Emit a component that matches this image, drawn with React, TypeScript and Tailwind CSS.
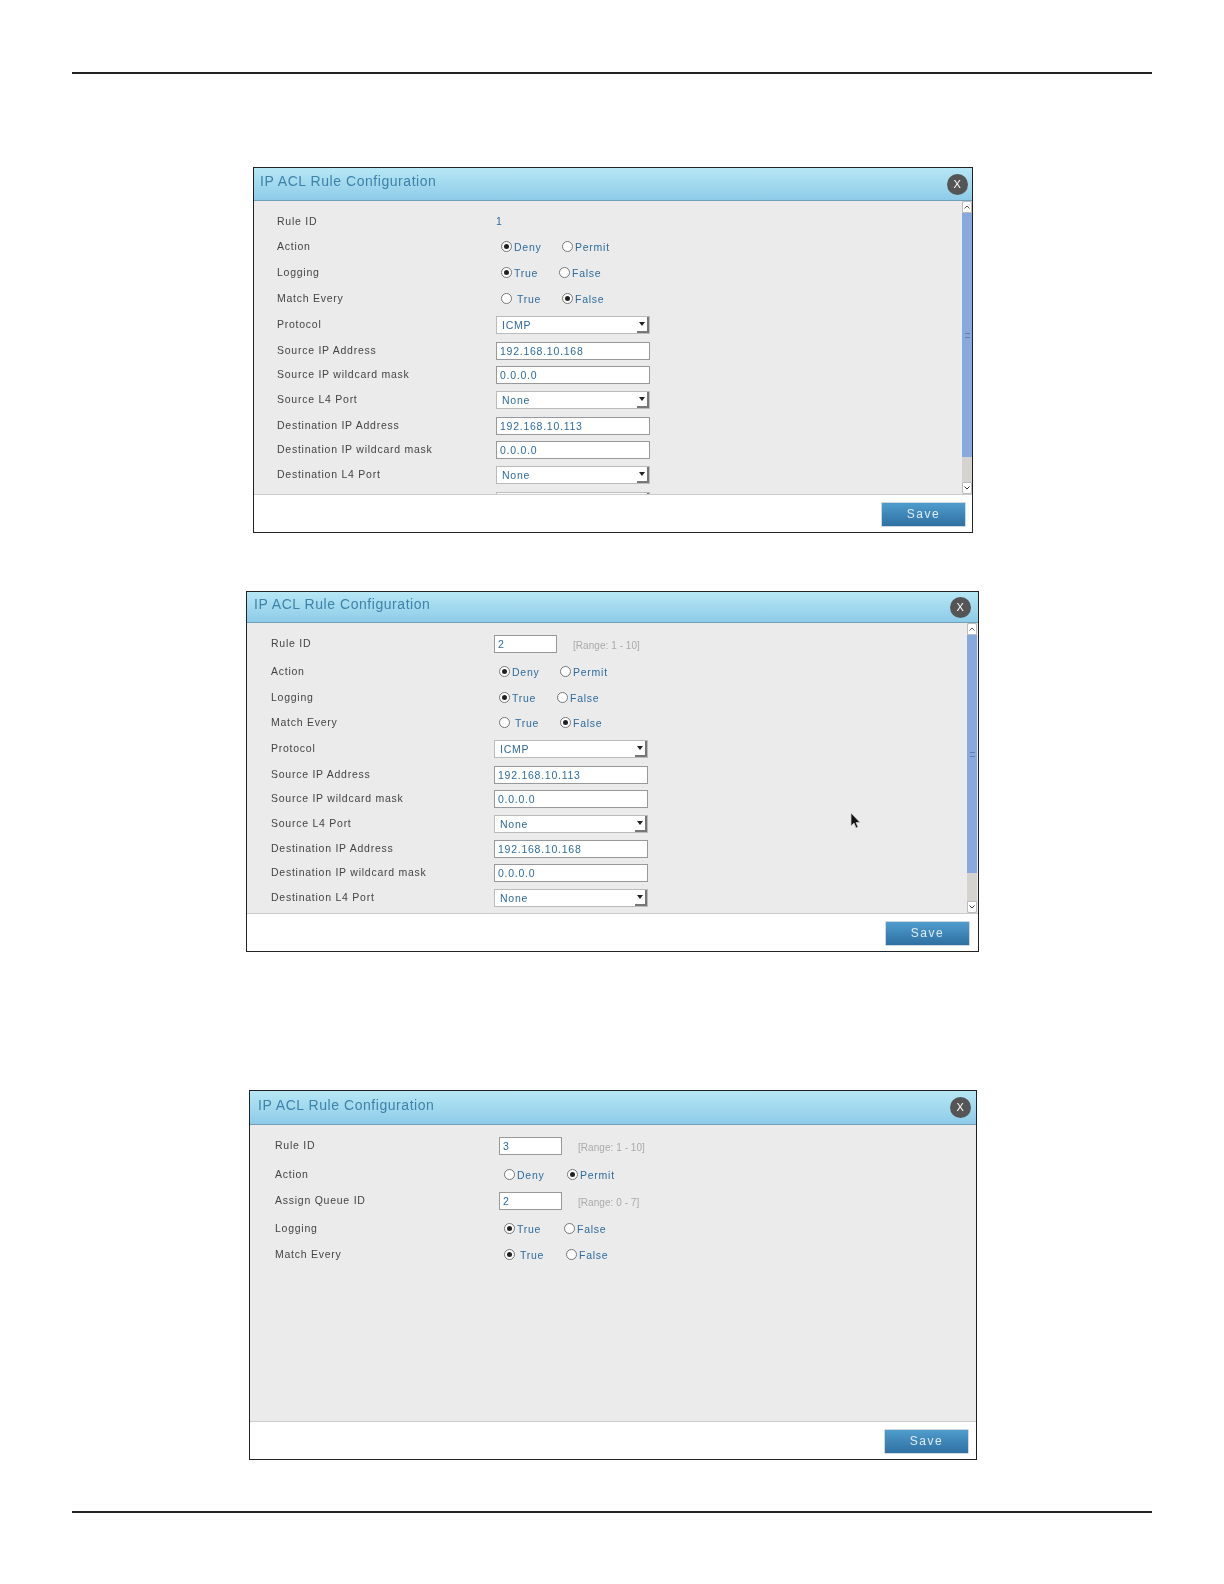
import { ReactNode } from "react";

type RadioOption = { label: string; checked?: boolean; textGap?: string };

function Radio({ checked }: { checked?: boolean }) {
  return (
    <span className="flex h-[11px] w-[11px] shrink-0 -translate-y-[1px] items-center justify-center rounded-full border border-[#777] bg-white">
      {checked && <span className="h-[5px] w-[5px] rounded-full bg-[#222]" />}
    </span>
  );
}

function Radios({ first, second, firstW }: { first: RadioOption; second: RadioOption; firstW: string }) {
  return (
    <div className="flex items-center pl-[5px]">
      <div className={`flex items-center ${firstW}`}>
        <Radio checked={first.checked} />
        <span className={`pt-[1px] text-[#2f6b9c] ${first.textGap ?? "ml-[2px]"}`}>{first.label}</span>
      </div>
      <div className="flex items-center">
        <Radio checked={second.checked} />
        <span className="ml-[2px] pt-[1px] text-[#2f6b9c]">{second.label}</span>
      </div>
    </div>
  );
}

function TextBox({ value }: { value: string }) {
  return (
    <div className="flex h-[18px] w-[154px] items-center border border-[#999] bg-white pt-[1px] pl-[3px] text-[#2f6b9c]">
      {value}
    </div>
  );
}

function SelectBox({ value }: { value: string }) {
  return (
    <div className="flex h-[18px] w-[154px] items-center border border-[#bbb] bg-white pl-[5px] text-[#2f6b9c]">
      <span className="pt-[1px]">{value}</span>
      <span className="ml-auto flex h-[16px] w-[12px] items-center justify-center border-r-2 border-b-2 border-[#777]">
        <svg width="6" height="4" viewBox="0 0 6 4">
          <path d="M0 0h6L3 4z" fill="#222" />
        </svg>
      </span>
    </div>
  );
}

function RangeBox({ value, range }: { value: string; range: string }) {
  return (
    <div className="flex items-center">
      <div className="flex h-[18px] w-[63px] items-center border border-[#999] bg-white pt-[1px] pl-[3px] text-[#2f6b9c]">
        {value}
      </div>
      <span className="ml-[16px] pt-[2px] text-[10px] tracking-[0.05px] text-[#aaa]">{range}</span>
    </div>
  );
}

function Row({ label, gap, labelW, children }: { label: string; gap: string; labelW: string; children: ReactNode }) {
  return (
    <div className={`flex h-[18px] shrink-0 items-center ${gap}`}>
      <div className={`shrink-0 pb-[1px] text-[#444] ${labelW}`}>{label}</div>
      {children}
    </div>
  );
}

function Scrollbar({ thumb, className = "" }: { thumb: string; className?: string }) {
  return (
    <div className={`flex w-[10px] shrink-0 flex-col bg-[#d5d3d0] ${className}`}>
      <div className="flex h-[12px] shrink-0 items-center justify-center rounded-t-[2px] border border-[#bbb] bg-white">
        <svg width="6" height="4" viewBox="0 0 6 4">
          <path d="M0.5 3.5L3 1l2.5 2.5" fill="none" stroke="#555" />
        </svg>
      </div>
      <div className={`flex shrink-0 items-center justify-center bg-[#87a9de] ${thumb}`}>
        <span className="h-[5px] w-[5px] border-y border-[#5d7fb5]" />
      </div>
      <div className="flex-1" />
      <div className="flex h-[12px] shrink-0 items-center justify-center rounded-b-[2px] border border-[#bbb] bg-white">
        <svg width="6" height="4" viewBox="0 0 6 4">
          <path d="M0.5 0.5L3 3l2.5-2.5" fill="none" stroke="#333" />
        </svg>
      </div>
    </div>
  );
}

function Dialog({
  className,
  headerH,
  titleLeft,
  closeRight,
  saveRight,
  bodyLeft,
  scrollbar,
  children,
}: {
  className: string;
  headerH: string;
  titleLeft: string;
  closeRight: string;
  saveRight: string;
  bodyLeft: string;
  scrollbar?: ReactNode;
  children: ReactNode;
}) {
  return (
    <div className={`relative flex flex-col border border-[#222] bg-white ${className}`}>
      <div
        className={`flex shrink-0 items-center justify-between border-b border-[#6f9fb9] bg-gradient-to-b from-[#b6e7f5] to-[#8ecbe8] ${headerH} ${titleLeft} ${closeRight}`}
      >
        <span className="pb-[5px] text-[14px] tracking-[0.55px] text-[#3f82a8]">IP ACL Rule Configuration</span>
        <button className="flex h-[21px] w-[21px] items-center justify-center rounded-full bg-[#555] text-[11px] text-white">
          X
        </button>
      </div>
      <div className="flex min-h-0 flex-1 border-b border-[#ccc] bg-[#ebebeb]">
        <div className={`flex min-w-0 flex-1 flex-col overflow-hidden pt-[12px] ${bodyLeft}`}>{children}</div>
        {scrollbar}
      </div>
      <div className={`flex h-[37px] shrink-0 items-center justify-end pt-[1px] ${saveRight}`}>
        <button className="h-[25px] w-[85px] rounded-[1px] border border-[#cfd8de] bg-gradient-to-b from-[#4f9dcd] to-[#2f70a2] text-[12px] tracking-[1.5px] text-[#dfecf4]">
          Save
        </button>
      </div>
    </div>
  );
}

export default function App() {
  const w1 = "w-[219px]";
  const w2 = "w-[223px]";
  const w3 = "w-[224px]";

  return (
    <div className="h-[1584px] w-[1224px] overflow-hidden bg-white pt-[72px] font-['Liberation_Sans',Arial,sans-serif] text-[10.5px] tracking-[0.75px] blur-[0.3px]">
      <div className="ml-[72px] h-[2px] w-[1080px] bg-[#222]" />

      <Dialog
        className="mt-[93px] ml-[253px] h-[366px] w-[720px]"
        headerH="h-[33px]"
        titleLeft="pl-[6px]"
        closeRight="pr-[4px]"
        saveRight="pr-[6px]"
        bodyLeft="pl-[23px]"
        scrollbar={<Scrollbar thumb="h-[244px]" />}
      >
        <Row label="Rule ID" gap="mt-0" labelW={w1}>
          <span className="text-[#2f6b9c]">1</span>
        </Row>
        <Row label="Action" gap="mt-[7px]" labelW={w1}>
          <Radios firstW="w-[61px]" first={{ label: "Deny", checked: true }} second={{ label: "Permit" }} />
        </Row>
        <Row label="Logging" gap="mt-[8px]" labelW={w1}>
          <Radios firstW="w-[58px]" first={{ label: "True", checked: true }} second={{ label: "False" }} />
        </Row>
        <Row label="Match Every" gap="mt-[8px]" labelW={w1}>
          <Radios firstW="w-[61px]" first={{ label: "True", textGap: "ml-[5px]" }} second={{ label: "False", checked: true }} />
        </Row>
        <Row label="Protocol" gap="mt-[8px]" labelW={w1}>
          <SelectBox value="ICMP" />
        </Row>
        <Row label="Source IP Address" gap="mt-[8px]" labelW={w1}>
          <TextBox value="192.168.10.168" />
        </Row>
        <Row label="Source IP wildcard mask" gap="mt-[6px]" labelW={w1}>
          <TextBox value="0.0.0.0" />
        </Row>
        <Row label="Source L4 Port" gap="mt-[7px]" labelW={w1}>
          <SelectBox value="None" />
        </Row>
        <Row label="Destination IP Address" gap="mt-[8px]" labelW={w1}>
          <TextBox value="192.168.10.113" />
        </Row>
        <Row label="Destination IP wildcard mask" gap="mt-[6px]" labelW={w1}>
          <TextBox value="0.0.0.0" />
        </Row>
        <Row label="Destination L4 Port" gap="mt-[7px]" labelW={w1}>
          <SelectBox value="None" />
        </Row>
        <Row label="" gap="mt-[8px]" labelW={w1}>
          <SelectBox value="" />
        </Row>
      </Dialog>

      <Dialog
        className="mt-[58px] ml-[246px] h-[361px] w-[733px]"
        headerH="h-[31px]"
        titleLeft="pl-[7px]"
        closeRight="pr-[7px]"
        saveRight="pr-[8px]"
        bodyLeft="pl-[24px]"
        scrollbar={<Scrollbar thumb="h-[238px]" className="mr-[1px]" />}
      >
        <Row label="Rule ID" gap="mt-0" labelW={w2}>
          <RangeBox value="2" range="[Range: 1 - 10]" />
        </Row>
        <Row label="Action" gap="mt-[10px]" labelW={w2}>
          <Radios firstW="w-[61px]" first={{ label: "Deny", checked: true }} second={{ label: "Permit" }} />
        </Row>
        <Row label="Logging" gap="mt-[8px]" labelW={w2}>
          <Radios firstW="w-[58px]" first={{ label: "True", checked: true }} second={{ label: "False" }} />
        </Row>
        <Row label="Match Every" gap="mt-[7px]" labelW={w2}>
          <Radios firstW="w-[61px]" first={{ label: "True", textGap: "ml-[5px]" }} second={{ label: "False", checked: true }} />
        </Row>
        <Row label="Protocol" gap="mt-[8px]" labelW={w2}>
          <SelectBox value="ICMP" />
        </Row>
        <Row label="Source IP Address" gap="mt-[8px]" labelW={w2}>
          <TextBox value="192.168.10.113" />
        </Row>
        <Row label="Source IP wildcard mask" gap="mt-[6px]" labelW={w2}>
          <TextBox value="0.0.0.0" />
        </Row>
        <Row label="Source L4 Port" gap="mt-[7px]" labelW={w2}>
          <SelectBox value="None" />
        </Row>
        <Row label="Destination IP Address" gap="mt-[7px]" labelW={w2}>
          <TextBox value="192.168.10.168" />
        </Row>
        <Row label="Destination IP wildcard mask" gap="mt-[6px]" labelW={w2}>
          <TextBox value="0.0.0.0" />
        </Row>
        <Row label="Destination L4 Port" gap="mt-[7px]" labelW={w2}>
          <SelectBox value="None" />
        </Row>

        {/* mouse pointer caught in the capture */}
        <svg className="absolute top-[220px] left-[603px]" width="12" height="18" viewBox="0 0 12 18">
          <path d="M1 1v13l3-3 2 5 2-1-2-4.500h4z" fill="#111" stroke="#ccc" strokeWidth="0.8" />
        </svg>
      </Dialog>

      <Dialog
        className="mt-[138px] ml-[249px] h-[370px] w-[728px]"
        headerH="h-[34px]"
        titleLeft="pl-[8px]"
        closeRight="pr-[5px]"
        saveRight="pr-[7px]"
        bodyLeft="pl-[25px]"
      >
        <Row label="Rule ID" gap="mt-0" labelW={w3}>
          <RangeBox value="3" range="[Range: 1 - 10]" />
        </Row>
        <Row label="Action" gap="mt-[11px]" labelW={w3}>
          <Radios firstW="w-[63px]" first={{ label: "Deny" }} second={{ label: "Permit", checked: true }} />
        </Row>
        <Row label="Assign Queue ID" gap="mt-[8px]" labelW={w3}>
          <RangeBox value="2" range="[Range: 0 - 7]" />
        </Row>
        <Row label="Logging" gap="mt-[10px]" labelW={w3}>
          <Radios firstW="w-[60px]" first={{ label: "True", checked: true }} second={{ label: "False" }} />
        </Row>
        <Row label="Match Every" gap="mt-[8px]" labelW={w3}>
          <Radios firstW="w-[62px]" first={{ label: "True", checked: true, textGap: "ml-[5px]" }} second={{ label: "False" }} />
        </Row>
      </Dialog>

      <div className="mt-[51px] ml-[72px] h-[2px] w-[1080px] bg-[#222]" />
    </div>
  );
}
